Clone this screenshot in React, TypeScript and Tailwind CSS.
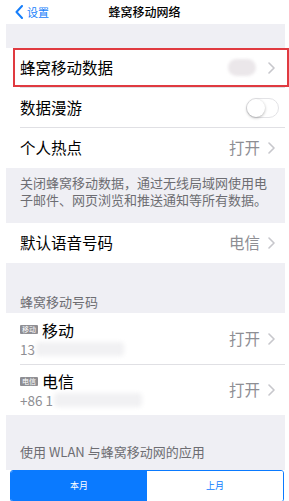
import React from "react";

const font = { fontFamily: '"Noto Sans CJK SC", "Noto Sans", sans-serif' };

function Chevron({ className = "" }: { className?: string }) {
  return (
    <svg width="7" height="12" viewBox="0 0 7 12" className={className}>
      <polyline points="1,1 6,6 1,11" fill="none" stroke="#c7c7cc" strokeWidth="1.6" strokeLinecap="round" strokeLinejoin="round" />
    </svg>
  );
}

function Row({
  label,
  value,
  last = false,
}: {
  label: string;
  value?: string;
  last?: boolean;
}) {
  return (
    <div className="flex h-[40px] items-center bg-white pl-[14px]">
      <div className={`flex h-full flex-1 items-center pr-[10px] ${last ? "" : "border-b border-[#e0e0e4]"}`}>
        <span className="flex-1 text-[15.5px] text-black">{label}</span>
        {value && <span className="mr-[8px] text-[15.5px] text-[#8e8e93]">{value}</span>}
        <Chevron />
      </div>
    </div>
  );
}

function SimRow({
  badge,
  name,
  number,
  last = false,
}: {
  badge: string;
  name: string;
  number: string;
  last?: boolean;
}) {
  return (
    <div className="flex bg-white pl-[14px]">
      <div className={`flex flex-1 items-center pr-[10px] ${last ? "h-[50px]" : "h-[52px] border-b border-[#e0e0e4]"}`}>
        <div className="flex flex-1 flex-col">
          <div className="flex items-center gap-[4px] leading-[20px]">
            <span className="rounded-[1px] bg-[#8e8e93] px-[2px] text-[7px] leading-[9px] text-white">{badge}</span>
            <span className="text-[16px] text-black">{name}</span>
          </div>
          <div className="flex items-center text-[13.5px] leading-[18px] text-[#8e8e93]">
            <span>{number}</span>
            <span className="ml-[1px] h-[14px] w-[88px] rounded-[4px] bg-[#f1f1f3] blur-[2px]" />
          </div>
        </div>
        <span className="mr-[8px] text-[15.5px] text-[#8e8e93]">打开</span>
        <Chevron />
      </div>
    </div>
  );
}

export default function App() {
  return (
    <div className="h-[501px] w-[289px] overflow-hidden bg-white" style={font}>
      <div className="relative flex h-[24px] items-center">
        <div className="flex items-center pl-[15px] text-[#157efb]">
          <svg width="8" height="14" viewBox="0 0 8 14">
            <polyline points="7,1 1.5,7 7,13" fill="none" stroke="#157efb" strokeWidth="2" strokeLinecap="round" strokeLinejoin="round" />
          </svg>
          <span className="ml-[4px] text-[11px]">设置</span>
        </div>
        <span className="absolute left-1/2 -translate-x-1/2 text-[12px] font-medium text-black">蜂窝移动网络</span>
      </div>

      <div className="ml-[6px] mr-[4px] flex flex-col bg-[#efeff4]">
        <div className="h-[24px]" />

        <div className="relative">
          <div className="flex h-[40px] items-center bg-white pl-[14px]">
            <div className="flex h-full flex-1 items-center border-b border-[#e0e0e4] pr-[10px]">
              <span className="flex-1 text-[15.5px] text-black">蜂窝移动数据</span>
              <span className="mr-[12px] h-[17px] w-[28px] rounded-full bg-[#ebe7ea] blur-[1.5px]" />
              <Chevron />
            </div>
          </div>
          <div className="pointer-events-none absolute left-[7px] right-[-4px] top-0 h-[39px] border-2 border-[#e03a40]" />
        </div>

        <div className="flex h-[40px] items-center bg-white pl-[14px]">
          <div className="flex h-full flex-1 items-center border-b border-[#e0e0e4] pr-[6px]">
            <span className="flex-1 text-[15.5px] text-black">数据漫游</span>
            <div className="relative h-[20px] w-[33px] rounded-full border border-[#e3e3e6] bg-white">
              <div className="absolute left-0 top-0 h-[18px] w-[18px] rounded-full bg-white shadow-[0_1px_3px_rgba(0,0,0,0.3)]" />
            </div>
          </div>
        </div>

        <Row label="个人热点" value="打开" last />

        <div className="px-[14px] pb-[15px] pt-[6px] text-[13px] leading-[17px] text-[#6d6d72]">
          关闭蜂窝移动数据，通过无线局域网使用电子邮件、网页浏览和推送通知等所有数据。
        </div>

        <Row label="默认语音号码" value="电信" last />

        <div className="flex h-[50px] items-end px-[14px] pb-[3px] text-[13px] leading-[17px] text-[#6d6d72]">
          蜂窝移动号码
        </div>

        <SimRow badge="移动" name="移动" number="13" />
        <SimRow badge="电信" name="电信" number="+86 1" last />

        <div className="flex h-[55px] items-end px-[14px] pb-[10px] text-[13px] leading-[17px] text-[#6d6d72]">
          使用 WLAN 与蜂窝移动网的应用
        </div>
      </div>

      <div className="ml-[10px] mr-[5px] flex h-[32px] overflow-hidden rounded-[3px] border border-[#0a7aff] text-[9px]">
        <div className="flex flex-1 items-center justify-center bg-[#0a7aff] text-white">本月</div>
        <div className="flex flex-1 items-center justify-center bg-white text-[#0a7aff]">上月</div>
      </div>
    </div>
  );
}
